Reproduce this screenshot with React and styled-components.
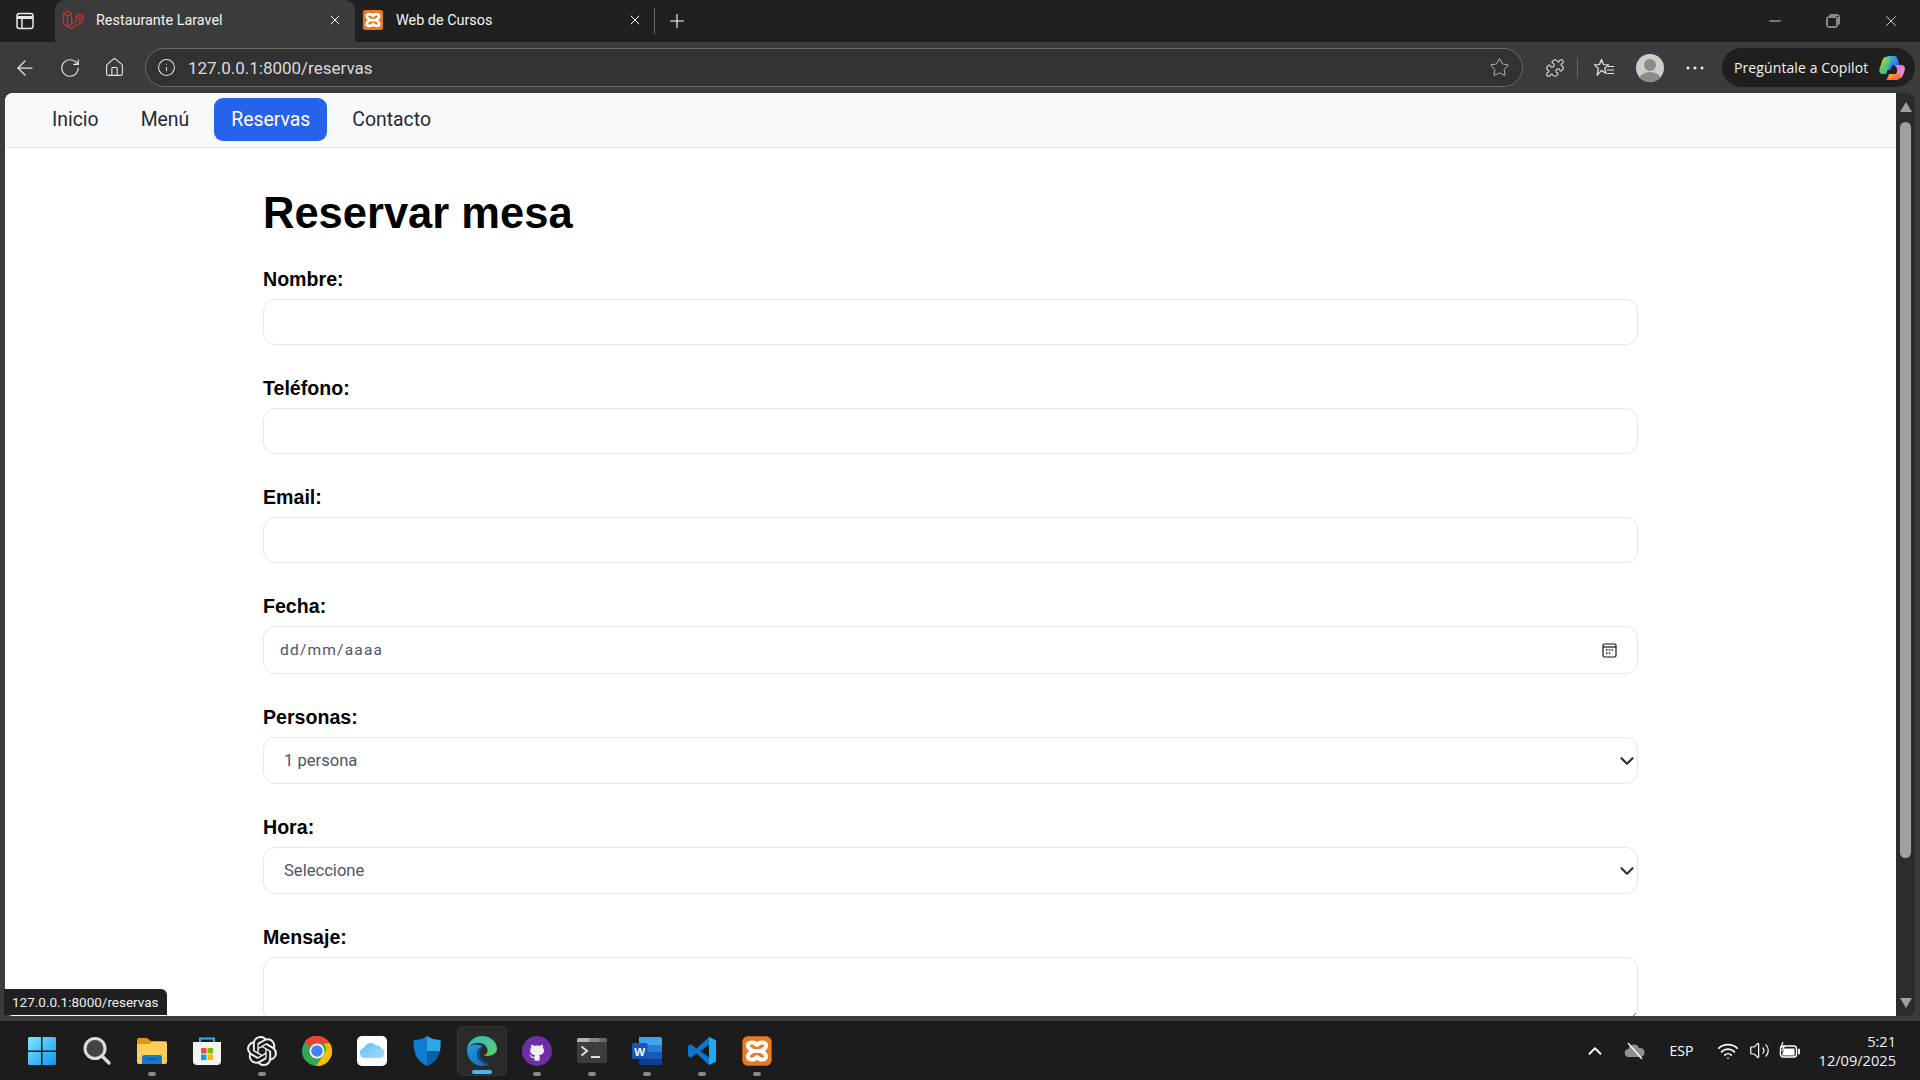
import React from 'react';
import styled, { createGlobalStyle } from 'styled-components';
import { ArrowLeft, RotateCw, Home, Info, Star, Puzzle, ChevronUp, ChevronDown, Wifi, Volume2, X, Minus, Plus } from 'lucide-react';
import { FaGithub } from 'react-icons/fa';
import { SiOpenai } from 'react-icons/si';

const Global = createGlobalStyle`
  html, body { margin: 0; padding: 0; height: 100%; overflow: hidden; background: #3b3b3b; }
  * { box-sizing: border-box; }
  #root { height: 100%; }
`;
const UI = `Roboto, "Open Sans", sans-serif`;
const Shell = styled.div`
  width: 1920px; height: 1080px; display: flex; flex-direction: column; position: relative;
  background: #3b3b3b; font-family: ${UI}; overflow: hidden;
`;
const TitleBar = styled.div`
  height: 42px; flex: none; background: #202020; display: flex; align-items: stretch; color: #fff; font-size: 14px;
`;
const SideBtn = styled.div`
  width: 55px; flex: none; display: flex; align-items: center; justify-content: center; padding-right: 5px;
  svg { display: block; }
`;
const Tab = styled.div`
  width: 300px; flex: none; display: flex; align-items: center; gap: 12px; padding: 0 12px 2px 7px;
  background: ${p => (p.$active ? '#3b3b3b' : 'transparent')};
  border-radius: 10px 10px 0 0;
  span { flex: 1; white-space: nowrap; color: #f2f2f2; font-family: Roboto, sans-serif; font-size: 14.4px; }
`;
const TabIcon = styled.div`
  width: 22px; height: 22px; flex: none; display: flex; align-items: center; justify-content: center;
`;
const TabDivider = styled.div`
  width: 1px; height: 26px; background: #666; align-self: center; margin-left: -1px;
`;
const NewTab = styled.div`
  width: 44px; display: flex; align-items: center; justify-content: center;
`;
const Spacer = styled.div` flex: 1; `;
const WinBtn = styled.div`
  width: 58px; flex: none; display: flex; align-items: center; justify-content: center;
`;
const ToolBar = styled.div`
  height: 51px; flex: none; background: #3b3b3b; display: flex; align-items: center; color: #e8e8e8; padding-left: 2px;
`;
const ToolBtn = styled.div`
  width: ${p => p.$w || 45}px; height: 36px; flex: none; display: flex; align-items: center; justify-content: center;
`;
const Address = styled.div`
  width: 1378px; height: 39px; flex: none; margin-left: 8px; margin-right: 9px; border: 1px solid #6a6a6a; border-radius: 20px;
  background: #323232; display: flex; align-items: center; padding: 0 12px 0 11px; color: #e6e6e6;
`;
const Url = styled.div`
  flex: 1; margin-left: 12px; font-size: 17px; color: #dcdcdc;
`;
const ToolDivider = styled.div` width: 1px; height: 20px; background: #666; flex: none; `;
const Avatar = styled.div`
  width: 28px; height: 28px; border-radius: 50%; background: #cfcdc9; position: relative; overflow: hidden;
  &::before { content: ''; position: absolute; left: 8px; top: 5px; width: 12px; height: 12px; border-radius: 50%; background: #8d8b87; }
  &::after { content: ''; position: absolute; left: 3px; top: 18px; width: 22px; height: 16px; border-radius: 50%; background: #8d8b87; }
`;
const Copilot = styled.div`
  width: 193px; height: 39px; flex: none; margin-left: 2px; background: #1f1f1f; border-radius: 20px; display: flex; align-items: center;
  justify-content: space-between; padding: 0 9px 0 12px; font-family: "Open Sans", sans-serif; font-size: 14px; color: #f2f2f2;
  white-space: nowrap; letter-spacing: .1px;
`;
const ViewportRow = styled.div`
  flex: 1; min-height: 0; display: flex; padding: 0 5px 5px 5px; position: relative;
`;
const Page = styled.div`
  flex: 1; min-width: 0; background: #fff; overflow: hidden; border-radius: 8px 0 0 8px;
  font-family: "Liberation Sans", Arial, sans-serif;
`;
const Nav = styled.nav`
  height: 55px; background: #f8f9fb; border-bottom: 1px solid #e5e7eb; display: flex; align-items: center; gap: 8px; padding: 0 0 0 30px;
`;
const NavLink = styled.a`
  font-family: ${UI}; font-size: 19.4px; height: 43px; display: flex; align-items: center; padding: 0 17px; border-radius: 9px;
  margin-top: -2px; color: ${p => (p.$active ? '#fff' : '#1f2937')}; background: ${p => (p.$active ? '#2563eb' : 'transparent')};
`;
const Container = styled.main`
  width: 1375px; margin: 0 auto;
`;
const Title = styled.h1`
  margin: 0; padding-top: 40px; height: 120px; font-size: 43.5px; line-height: 50px; font-weight: 700; color: #000;
`;
const Field = styled.div` margin-bottom: 32px; `;
const Label = styled.label`
  display: block; font-size: 19.6px; line-height: 23px; font-weight: 700; color: #000; margin-bottom: 8px;
`;
const controlBase = `
  display: block; width: 100%; background: #fff; border: 1px solid #e5e7eb; border-radius: 12px; outline: none;
  font-family: Roboto, sans-serif; font-size: 16.6px; color: #4b5563;
`;
const Input = styled.input` ${controlBase} height: 46px; padding: 0 16px; `;
const DateField = styled.div`
  ${controlBase} height: 48px; padding: 0 20px 0 16px; display: flex; align-items: center; justify-content: space-between;
  font-size: 15.5px; letter-spacing: 1.2px; color: #4b5563;
`;
const SelectWrap = styled.div`
  position: relative;
  svg { position: absolute; right: 0; top: 50%; transform: translateY(-50%); color: #2b3245; pointer-events: none; }
`;
const Select = styled.select` ${controlBase} height: 47px; padding: 0 30px 0 20px; appearance: none; `;
const TextArea = styled.textarea` ${controlBase} height: 65px; padding: 12px 16px; `;
const Scrollbar = styled.div`
  width: 19px; flex: none; background: #2c2c2c; border-radius: 0 8px 8px 0; position: relative; display: flex; flex-direction: column; align-items: center;
  padding: 9px 0 8px;
`;
const Arrow = styled.div`
  width: 0; height: 0; border-left: 6.5px solid transparent; border-right: 6.5px solid transparent;
  ${p => (p.$down ? 'border-top: 10px solid #a0a0a0;' : 'border-bottom: 10px solid #a0a0a0;')}
`;
const Thumb = styled.div`
  width: 11px; height: 736px; background: #a0a0a0; border-radius: 6px; margin-top: 10px;
`;
const Status = styled.div`
  position: absolute; left: 4px; bottom: 6px; width: 163px; height: 26px; background: #202020; color: #eee; display: flex; align-items: center;
  padding-left: 8px; font-size: 13.5px; border-radius: 0 6px 0 0;
`;
const TaskBar = styled.div`
  height: 59px; flex: none; background: #1c1c1c; display: flex; align-items: center; padding-left: 14px; color: #fff;
`;
const Slot = styled.div`
  width: ${p => (p.$active ? 50 : 55)}px; height: 50px; flex: none; position: relative; display: flex; align-items: center; justify-content: center; border-radius: 5px;
  ${p => p.$active && 'margin: 0 2.5px; background: #2a2a2a; border: 1px solid #333;'}
  &::after {
    content: ${p => (p.$dot || p.$active ? "''" : 'none')}; position: absolute; bottom: ${p => (p.$active ? 1 : 0)}px; left: 50%; transform: translateX(-50%);
    width: ${p => (p.$active ? 20 : 8)}px; height: 3.5px; border-radius: 2px; background: ${p => (p.$active ? '#47b8f5' : '#8a8a8a')};
  }
`;
const Tray = styled.div`
  margin-left: auto; display: flex; align-items: center; height: 100%; padding-right: 24px;
`;
const TrayItem = styled.div`
  width: ${p => p.$w}px; margin-left: ${p => p.$ml || 0}px; display: flex; align-items: center; justify-content: center; font-family: "Open Sans", sans-serif; font-size: 14px;
`;
const Clock = styled.div`
  margin-left: 14px; text-align: right; font-family: "Open Sans", sans-serif; font-size: 14.600px; line-height: 19px; color: #f2f2f2;
`;

const Laravel = () => (
  <svg width="22" height="22" viewBox="0 0 24 24" fill="none" stroke="#c4342c" strokeWidth="1.3" strokeLinejoin="round">
    <path d="M1.5 5L6 2.400 10.500 5v11l5-2.800V8l4-2.400L23 8v5L10.500 21.500 1.500 16.500Z" />
    <path d="M1.500 5L6 7.600 10.500 5M6 7.600V19M15.500 8l4 2.400L23 8M19.500 10.400v5.200M10.500 16l-4.500 3" />
  </svg>
);
const XamppShape = ({ s = 22, r = 3 }) => (
  <svg width={s} height={s} viewBox="0 0 24 24">
    <rect x="1" y="1" width="22" height="22" rx={r} fill="#ea7a22" />
    <path fill="none" stroke="#fff" strokeWidth="3" strokeLinejoin="round"
      d="M12 7.500C10 4.800 5.200 4.800 5.200 8c0 2.300 2 2.800 3.800 4-1.800 1.200-3.800 1.700-3.800 4 0 3.200 4.800 3.200 6.800.5 2 2.700 6.800 2.700 6.800-.5 0-2.300-2-2.800-3.800-4 1.800-1.200 3.800-1.700 3.800-4 0-3.200-4.800-3.200-6.800-.5ZM9 12h6" />
  </svg>
);
const SidebarIcon = () => (
  <svg width="18" height="18" viewBox="0 0 18 18" fill="none" stroke="#e8e8e8" strokeWidth="1.500">
    <rect x="1" y="1.500" width="16" height="15" rx="2.500" />
    <path d="M1 5.500h16" strokeWidth="3" />
    <path d="M6 5v11" />
  </svg>
);
const RestoreIcon = () => (
  <svg width="14" height="14" viewBox="0 0 14 14" fill="none" stroke="#eee" strokeWidth="1">
    <rect x="1" y="3" width="10" height="10" rx="1.500" />
    <path d="M3.500 1H11.500A1.500 1.500 0 0 1 13 2.500V10.500" />
  </svg>
);
const FavIcon = () => (
  <svg width="22" height="22" viewBox="0 0 22 22" fill="none" stroke="#e8e8e8" strokeWidth="1.200" strokeLinejoin="round">
    <path d="M8.500 2.500l2 5 5 .4-3.800 3.300 1.200 5-4.400-2.800-4.400 5 1.200-7.200L1.500 7.900l5-.4Z" />
    <path d="M15 9.500h6M14 13h7M14 16.500h7" />
  </svg>
);
const CopilotIcon = () => (
  <svg width="28" height="28" viewBox="0 0 28 28">
    <defs>
      <linearGradient id="cpA" x1="0" y1="0" x2="1" y2="1"><stop offset="0" stopColor="#2fd0d8" /><stop offset=".5" stopColor="#3a8de8" /><stop offset="1" stopColor="#1c4fd0" /></linearGradient>
      <linearGradient id="cpB" x1="0" y1="0" x2="1" y2="1"><stop offset="0" stopColor="#d36be8" /><stop offset="1" stopColor="#f09ac8" /></linearGradient>
      <linearGradient id="cpC" x1="0" y1="0" x2="1" y2="1"><stop offset="0" stopColor="#ffd23f" /><stop offset=".5" stopColor="#58c86a" /><stop offset="1" stopColor="#22b0c8" /></linearGradient>
      <linearGradient id="cpD" x1="0" y1="0" x2="1" y2="1"><stop offset="0" stopColor="#ffb13b" /><stop offset="1" stopColor="#f0483c" /></linearGradient>
    </defs>
    <path fill="url(#cpA)" d="M8 2h8c2 0 3 1 3.500 3l2 6h-7l-2 5H6l4-10C10.700 4 9.500 2 8 2Z" />
    <path fill="url(#cpC)" d="M8 3C6 3 5 4.500 4.500 6L1.500 15c-.8 3 1 5 3.500 5h3l2-5 3-9C13 4 11 3 8 3Z" />
    <path fill="url(#cpB)" d="M15 11h8c3 0 4.500 2 3.800 5-.6 2-1.500 4-2.300 6-.6 1.500-2 2.500-4 2.500h-4l2.500-7c.8-2.500-1-6.500-4-6.500Z" />
    <path fill="url(#cpD)" d="M8 26h11c1.700 0 2.500-1 3-2.500L23 20H11l-1.500 4c-.3.800-.8 2-1.500 2Z" />
  </svg>
);
const CalendarIcon = () => (
  <svg width="15" height="15" viewBox="0 0 15 15" fill="none" stroke="#111" strokeWidth="1.200">
    <rect x="1" y="1" width="13" height="13" rx="1.500" />
    <path d="M1 4h13" />
    <path stroke="#222" strokeWidth="1.600" d="M4 7h1.500M6.800 7h1.500M9.600 7h1.500M4 10.200h1.500M6.800 10.200h1.500" />
  </svg>
);
const WinLogo = () => (
  <svg width="30" height="30" viewBox="0 0 30 30">
    <defs><linearGradient id="wl" x1="0" y1="0" x2="1" y2="1"><stop offset="0" stopColor="#7fe8fc" /><stop offset="1" stopColor="#0e94f3" /></linearGradient></defs>
    <path fill="url(#wl)" d="M1 2.500A1.500 1.500 0 0 1 2.500 1H14v13.500H1ZM15.500 1H27.500A1.500 1.500 0 0 1 29 2.500V14.500H15.500ZM1 16H14V29H2.500A1.500 1.500 0 0 1 1 27.500ZM15.500 16H29V27.500A1.500 1.500 0 0 1 27.500 29H15.500Z" />
  </svg>
);
const SearchIcon = () => (
  <svg width="30" height="30" viewBox="0 0 30 30" fill="#444" stroke="#dcdcdc" strokeLinecap="round">
    <circle cx="13" cy="12.500" r="10" strokeWidth="3" />
    <path d="M20.500 20.500L27 27" strokeWidth="3.200" fill="none" />
  </svg>
);
const FolderIcon = () => (
  <svg width="30" height="30" viewBox="0 0 30 30">
    <path fill="#d99b0b" d="M0 4a2 2 0 0 1 2-2h8l4 3h14a2 2 0 0 1 2 2v6H0Z" />
    <path fill="#fdcf5a" d="M0 8h12l3-2h13a2 2 0 0 1 2 2v18a2 2 0 0 1-2 2H2a2 2 0 0 1-2-2Z" />
    <path fill="#1379cf" d="M5 21a2 2 0 0 1 2-2h16a2 2 0 0 1 2 2v7H5Z" />
    <path stroke="#0a4f92" strokeWidth="1.200" d="M10 23h10" />
  </svg>
);
const StoreIcon = () => (
  <svg width="30" height="30" viewBox="0 0 30 30">
    <path fill="none" stroke="#28b4ec" strokeWidth="2" d="M8 9V2.500h14V9" />
    <path fill="#f4f4f4" d="M1 6h28v19a4 4 0 0 1-4 4H5a4 4 0 0 1-4-4Z" />
    <rect x="9" y="12" width="5.500" height="5.500" fill="#f25022" /><rect x="15.500" y="12" width="5.500" height="5.500" fill="#7fba00" />
    <rect x="9" y="18.500" width="5.500" height="5.500" fill="#00a4ef" /><rect x="15.500" y="18.500" width="5.500" height="5.500" fill="#ffb900" />
  </svg>
);
const GptIcon = () => <SiOpenai size={30} color="#f0f0f0" />;
const ChromeIcon = () => (
  <svg width="30" height="30" viewBox="0 0 30 30">
    <circle cx="15" cy="15" r="15" fill="#34a853" />
    <path fill="#ea4335" d="M15 0a15 15 0 0 1 13 7.500H15a7.500 7.500 0 0 0-7 5L3 5A15 15 0 0 1 15 0Z" />
    <path fill="#fbbc04" d="M28 7.500A15 15 0 0 1 14 30l7.500-11a7.500 7.500 0 0 0 0-11.500Z" />
    <circle cx="15" cy="15" r="7.500" fill="#fff" />
    <circle cx="15" cy="15" r="5.800" fill="#3f83f0" />
  </svg>
);
const CloudTile = () => (
  <svg width="30" height="30" viewBox="0 0 30 30">
    <defs><linearGradient id="ic" x1="0" y1="0" x2="1" y2="1"><stop offset="0" stopColor="#5cc0f8" /><stop offset="1" stopColor="#a5dcfb" /></linearGradient></defs>
    <rect width="30" height="30" rx="5" fill="#fff" />
    <path fill="url(#ic)" d="M8 22a5 5 0 0 1-1-9.900A7 7 0 0 1 19 9.500a5 5 0 0 1 5.500 3A5 5 0 0 1 23 22Z" />
  </svg>
);
const Shield = () => (
  <svg width="30" height="30" viewBox="0 0 30 30">
    <path fill="#0f7cd0" d="M15 0c3 2.500 8 4 13.500 4 .3 12-2.500 21-13.500 26C4 25 1.200 16 1.500 4 7 4 12 2.500 15 0Z" />
    <path fill="#2aa8e8" d="M15 0c3 2.500 8 4 13.500 4 .1 3.500 0 7.500-.5 11H15Z" />
    <path fill="#0b5fa5" d="M15 15h13c-1.300 6.500-5 11.500-13 15Z" />
  </svg>
);
const EdgeIcon = () => (
  <svg width="30" height="30" viewBox="0 0 30 30">
    <defs>
      <linearGradient id="eg" x1="0" y1="0" x2="1" y2="1"><stop offset="0" stopColor="#2db3d8" /><stop offset="1" stopColor="#5ed35c" /></linearGradient>
      <linearGradient id="eb" x1="0" y1="0" x2="1" y2="1"><stop offset="0" stopColor="#1fa0e0" /><stop offset="1" stopColor="#0f5fb0" /></linearGradient>
    </defs>
    <path fill="url(#eg)" d="M15 0C7 0 1 6 0 13c3-5 8-7 13-6 6 1 8 5 7.500 9-.3 2-2 3-4 3 3 2 13 1 13.500-6C30 6 24 0 15 0Z" />
    <path fill="url(#eb)" d="M0 14C0 24 8 30 15 30c3.500 0 6-1 8-2.500-5 1-11-1.500-12.500-7C9 15 12 11 16 11c-5-4-15-3-16 3Z" />
    <path fill="#0b4a8e" d="M16 11c-4 0-7 4-5.500 9.500C12 26 18 28.500 23 27.500c-4-.5-8-3-9.500-7-1-3 0-8 2.500-9.500Z" />
  </svg>
);
const GithubIcon = () => (
  <svg width="30" height="30" viewBox="0 0 30 30">
    <circle cx="15" cy="15" r="15" fill="#6d2fa5" />
    <circle cx="15" cy="15" r="10" fill="#f2eef6" />
    <FaGithub x="4" y="4" size={22} color="#6d2fa5" />
  </svg>
);
const TerminalIcon = () => (
  <svg width="30" height="30" viewBox="0 0 30 30">
    <rect y="2" width="30" height="25" rx="2" fill="#3d3d3d" />
    <path fill="#b5b5b5" d="M0 4a2 2 0 0 1 2-2h10v4H0Z" /><rect x="12" y="2" width="10" height="4" fill="#888" /><path fill="#6a6a6a" d="M22 2h6a2 2 0 0 1 2 2v2h-8Z" />
    <path fill="none" stroke="#ddd" strokeWidth="2" d="M4.500 10.500l5.500 4.500-5.500 4.500" />
    <path stroke="#ddd" strokeWidth="2" d="M14 21h9" />
  </svg>
);
const WordIcon = () => (
  <svg width="30" height="30" viewBox="0 0 30 30">
    <path fill="#41a5ee" d="M7 1h21a2 2 0 0 1 2 2v6H7Z" /><rect x="7" y="9" width="23" height="7" fill="#2b7cd3" /><rect x="7" y="16" width="23" height="7" fill="#185abd" />
    <path fill="#103f91" d="M7 23h23v4a2 2 0 0 1-2 2H9a2 2 0 0 1-2-2Z" />
    <rect y="7" width="15.500" height="16" rx="1.500" fill="#1a55b5" />
    <text x="7.700" y="19.500" textAnchor="middle" fontFamily="Liberation Sans, sans-serif" fontWeight="700" fontSize="11.500" fill="#fff">W</text>
  </svg>
);
const VsIcon = () => (
  <svg width="30" height="30" viewBox="0 0 30 30">
    <path fill="#0a78c8" d="M22 1L9.500 12.500 4 8.300 1 10v10l3 1.700 5.500-4.200L22 29ZM22 8.500L13.500 15 22 21.500Z" fillRule="evenodd" />
    <path fill="#22a7f0" d="M22 1l7 3.200v21.600L22 29Z" />
  </svg>
);
const CloudOff = () => (
  <svg width="22" height="22" viewBox="0 0 22 22">
    <path fill="#8f8f8f" d="M5 17a4 4 0 0 1-.5-8A5.500 5.500 0 0 1 15 8a4 4 0 0 1 2 9Z" />
    <path stroke="#fff" strokeWidth="1.300" d="M4 3l14 16" />
  </svg>
);
const BatteryIcon = () => (
  <svg width="22" height="20" viewBox="0 0 22 20" fill="none" stroke="#fff" strokeWidth="1.400">
    <rect x="1.500" y="5" width="16" height="11" rx="2.500" />
    <path fill="#fff" stroke="none" d="M5 7.500h10.500v7H3Z" />
    <path d="M20 8.500v4" strokeLinecap="round" strokeWidth="1.800" />
    <path stroke="#fff" strokeWidth="1.200" d="M4 1L2 6h3l-2 4" />
  </svg>
);

const apps = [
  [WinLogo], [SearchIcon], [FolderIcon, true], [StoreIcon], [GptIcon, true], [ChromeIcon], [CloudTile], [Shield],
  [EdgeIcon, false, true], [GithubIcon, true], [TerminalIcon, true], [WordIcon, true], [VsIcon, true], [() => <XamppShape s={32} r={4} />, true],
];

export default function App() {
  return (
    <Shell>
      <Global />
      <TitleBar>
        <SideBtn><SidebarIcon /></SideBtn>
        <Tab $active><TabIcon><Laravel /></TabIcon><span>Restaurante Laravel</span><X size={16} strokeWidth={1.500} /></Tab>
        <Tab><TabIcon><XamppShape /></TabIcon><span>Web de Cursos</span><X size={16} strokeWidth={1.500} /></Tab>
        <TabDivider />
        <NewTab><Plus size={22} strokeWidth={1.200} /></NewTab>
        <Spacer />
        <WinBtn><Minus size={18} strokeWidth={1} /></WinBtn>
        <WinBtn><RestoreIcon /></WinBtn>
        <WinBtn><X size={18} strokeWidth={1} /></WinBtn>
      </TitleBar>
      <ToolBar>
        <ToolBtn><ArrowLeft size={24} strokeWidth={1.250} /></ToolBtn>
        <ToolBtn><RotateCw size={22} strokeWidth={1.250} /></ToolBtn>
        <ToolBtn><Home size={21} strokeWidth={1.250} /></ToolBtn>
        <Address>
          <Info size={19} strokeWidth={1.300} />
          <Url>127.0.0.1:8000/reservas</Url>
          <Star size={21} strokeWidth={1.100} color="#bbb" />
        </Address>
        <ToolBtn><Puzzle size={20} strokeWidth={1.250} /></ToolBtn>
        <ToolDivider />
        <ToolBtn $w={52}><FavIcon /></ToolBtn>
        <ToolBtn $w={40}><Avatar /></ToolBtn>
        <ToolBtn $w={50}><svg width="18" height="4" viewBox="0 0 18 4" fill="#eee"><circle cx="2" cy="2" r="1.500" /><circle cx="9" cy="2" r="1.500" /><circle cx="16" cy="2" r="1.500" /></svg></ToolBtn>
        <Copilot>Pregúntale a Copilot<CopilotIcon /></Copilot>
      </ToolBar>
      <ViewportRow>
        <Page>
          <Nav>
            <NavLink>Inicio</NavLink>
            <NavLink>Menú</NavLink>
            <NavLink $active>Reservas</NavLink>
            <NavLink>Contacto</NavLink>
          </Nav>
          <Container>
            <Title>Reservar mesa</Title>
            <Field><Label>Nombre:</Label><Input /></Field>
            <Field><Label>Teléfono:</Label><Input /></Field>
            <Field><Label>Email:</Label><Input /></Field>
            <Field><Label>Fecha:</Label><DateField>dd/mm/aaaa<CalendarIcon /></DateField></Field>
            <Field><Label>Personas:</Label><SelectWrap><Select defaultValue="1"><option value="1">1 persona</option><option value="2">2 personas</option></Select><ChevronDown size={22} strokeWidth={2.400} /></SelectWrap></Field>
            <Field><Label>Hora:</Label><SelectWrap><Select defaultValue=""><option value="">Seleccione</option><option value="13">13:00</option></Select><ChevronDown size={22} strokeWidth={2.400} /></SelectWrap></Field>
            <Field><Label>Mensaje:</Label><TextArea /></Field>
          </Container>
        </Page>
        <Scrollbar><Arrow /><Thumb /><Spacer /><Arrow $down /></Scrollbar>
        <Status>127.0.0.1:8000/reservas</Status>
      </ViewportRow>
      <TaskBar>
        {apps.map(([Icon, dot, active], i) => (
          <Slot key={i} $dot={dot} $active={active}><Icon /></Slot>
        ))}
        <Tray>
          <TrayItem $w={32}><ChevronUp size={22} strokeWidth={2} /></TrayItem>
          <TrayItem $w={48}><CloudOff /></TrayItem>
          <TrayItem $w={46}>ESP</TrayItem>
          <TrayItem $w={33} $ml={7}><Wifi size={22} strokeWidth={1.800} /></TrayItem>
          <TrayItem $w={30}><Volume2 size={21} strokeWidth={1.400} /></TrayItem>
          <TrayItem $w={30}><BatteryIcon /></TrayItem>
          <Clock>5:21<br />12/09/2025</Clock>
        </Tray>
      </TaskBar>
    </Shell>
  );
}
